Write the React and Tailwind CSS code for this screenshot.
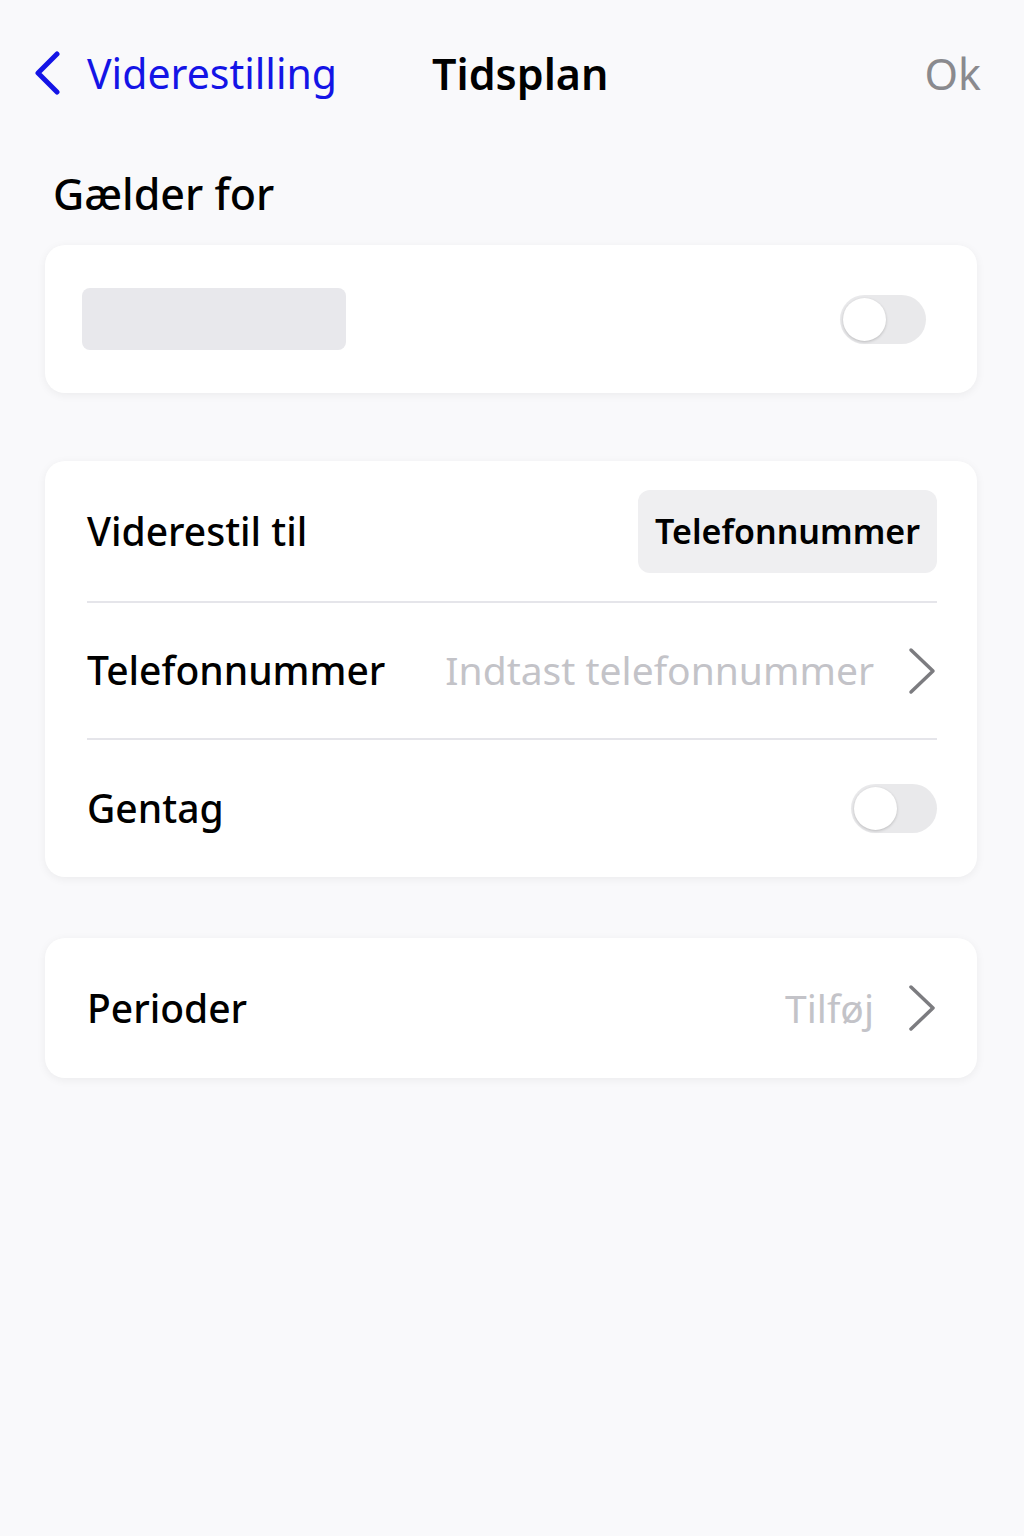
const font = { fontFamily: '"Noto Sans", "Open Sans", sans-serif' };

const BackChevron = () => (
  <svg width="28" height="44" viewBox="0 0 28 44" fill="none" stroke="currentColor" strokeWidth="5" strokeLinecap="round" strokeLinejoin="round">
    <polyline points="24,3 5,22 24,41" />
  </svg>
);

const Chevron = () => (
  <svg width="30" height="48" viewBox="0 0 30 48" fill="none" stroke="#7c7c80" strokeWidth="3.5" strokeLinecap="round" strokeLinejoin="round">
    <polyline points="4,3 26,24 4,45" />
  </svg>
);

const Toggle = () => (
  <div className="w-[86px] h-[49px] rounded-full bg-[#e9e9eb] p-[3px] flex items-center">
    <div className="w-[43px] h-[43px] rounded-full bg-white shadow-[0_1px_3px_rgba(0,0,0,0.2)]" />
  </div>
);

const Card = ({ children, className = '' }) => (
  <div className={`bg-white rounded-[20px] shadow-[0_2px_10px_rgba(0,0,0,0.06)] ${className}`}>{children}</div>
);

export default function App() {
  return (
    <div className="min-h-[1536px] bg-[#f9f9fb] text-black" style={font}>
      <header className="flex items-center justify-between h-[146px] pl-[33px] pr-[43px] relative">
        <div className="flex items-center gap-[26px] text-[#1414e6]">
          <BackChevron />
          <span className="text-[41px] leading-none">Viderestilling</span>
        </div>
        <span className="absolute left-[432px] text-[43px] font-semibold leading-none">Tidsplan</span>
        <span className="text-[43px] leading-none text-[#8a8a8e]">Ok</span>
      </header>

      <h2 className="px-[53px] text-[43px] font-medium leading-none mt-[26px]">Gælder for</h2>

      <div className="pl-[45px] pr-[47px] mt-[30px] flex flex-col">
        <Card className="h-[148px] flex items-center justify-between pl-[37px] pr-[51px]">
          <div className="w-[264px] h-[62px] rounded-[8px] bg-[#e8e8ec]" />
          <Toggle />
        </Card>

        <Card className="mt-[68px] pl-[42px] pr-[40px] flex flex-col">
          <div className="h-[142px] flex items-center justify-between border-b-2 border-[#e5e5ea]">
            <span className="text-[39px] font-medium">Viderestil til</span>
            <span className="h-[83px] px-[17px] rounded-[12px] bg-[#efeff1] flex items-center text-[34px] font-semibold">Telefonnummer</span>
          </div>
          <div className="h-[137px] flex items-center justify-between border-b-2 border-[#e5e5ea]">
            <span className="text-[39px] font-medium">Telefonnummer</span>
            <div className="flex items-center gap-[33px]">
              <span className="text-[39px] text-[#c3c3c8]">Indtast telefonnummer</span>
              <Chevron />
            </div>
          </div>
          <div className="h-[137px] flex items-center justify-between">
            <span className="text-[39px] font-medium">Gentag</span>
            <Toggle />
          </div>
        </Card>

        <Card className="mt-[61px] h-[140px] pl-[42px] pr-[40px] flex items-center justify-between">
          <span className="text-[39px] font-medium">Perioder</span>
          <div className="flex items-center gap-[33px]">
            <span className="text-[39px] text-[#c3c3c8]">Tilføj</span>
            <Chevron />
          </div>
        </Card>
      </div>
    </div>
  );
}
